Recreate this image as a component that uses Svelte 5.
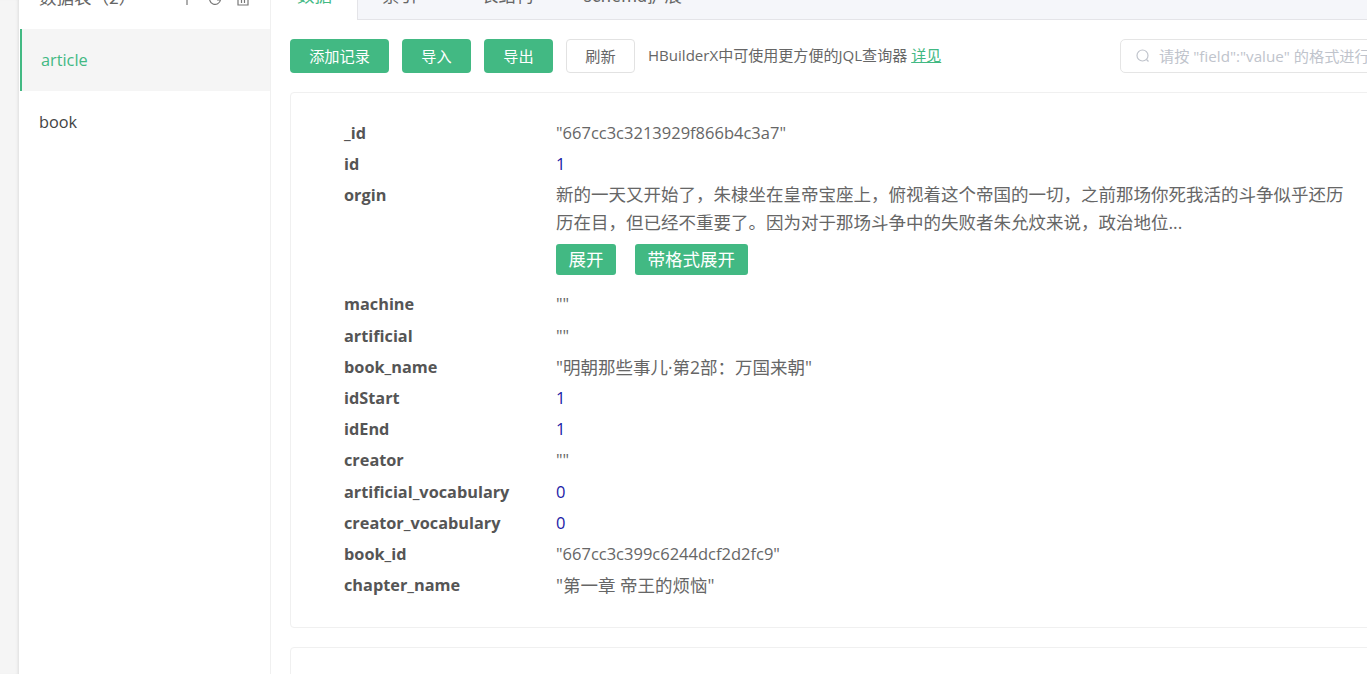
<script>
  const rows = [
    { k: '_id', v: '"667cc3c3213929f866b4c3a7"' },
    { k: 'id', v: '1', n: true },
    { k: 'orgin', long: true },
    { k: 'machine', v: '""' },
    { k: 'artificial', v: '""' },
    { k: 'book_name', v: '"明朝那些事儿·第2部：万国来朝"', cjk: true },
    { k: 'idStart', v: '1', n: true },
    { k: 'idEnd', v: '1', n: true },
    { k: 'creator', v: '""' },
    { k: 'artificial_vocabulary', v: '0', n: true },
    { k: 'creator_vocabulary', v: '0', n: true },
    { k: 'book_id', v: '"667cc3c399c6244dcf2d2fc9"' },
    { k: 'chapter_name', v: '"第一章 帝王的烦恼"', cjk: true }
  ];
</script>

<div class="page">
  <div class="gutter"></div>
  <aside class="side">
    <div class="side-head">
      <span class="side-title">数据表（2）</span>
      <span class="side-icons">
        <svg width="14" height="14" viewBox="0 0 14 14"><path d="M7 1v12M1 7h12" /></svg>
        <svg width="14" height="14" viewBox="0 0 14 14"><path d="M11 3A5.500 5.500 0 1 0 12.500 8H9" /></svg>
        <svg width="14" height="14" viewBox="0 0 14 14"><path d="M1 3h12M2 3v10h10V3M5 1h4M5.500 6v5M8.500 6v5" /></svg>
      </span>
    </div>
    <div class="item active">article</div>
    <div class="item">book</div>
  </aside>
  <main class="main">
    <div class="tabs">
      <span class="tab on">数据</span>
      <div class="tab-rest">
        <span class="tab">索引</span>
        <span class="tab">表结构</span>
        <span class="tab">schema扩展</span>
      </div>
    </div>
    <div class="toolbar">
      <button class="btn green wide">添加记录</button>
      <button class="btn green">导入</button>
      <button class="btn green">导出</button>
      <button class="btn plain">刷新</button>
      <span class="hint">HBuilderX中可使用更方便的JQL查询器 <a href="#top">详见</a></span>
      <div class="search">
        <svg width="14" height="14" viewBox="0 0 14 14"><circle cx="6.500" cy="6.500" r="5.500" /><path d="M10.500 10.500l2 2" /></svg>
        <span>请按 "field":"value" 的格式进行搜索</span>
      </div>
    </div>
    <section class="card">
      {#each rows as r}
        <div class="row" class:tall={r.long}>
          <div class="key">{r.k}</div>
          {#if r.long}
            <div class="val cjk">
              <p class="text">新的一天又开始了，朱棣坐在皇帝宝座上，俯视着这个帝国的一切，之前那场你死我活的斗争似乎还历历在目，但已经不重要了。因为对于那场斗争中的失败者朱允炆来说，政治地位...</p>
              <div class="more">
                <button class="mini">展开</button>
                <button class="mini">带格式展开</button>
              </div>
            </div>
          {:else}
            <div class="val" class:num={r.n} class:cjk={r.cjk}>{r.v}</div>
          {/if}
        </div>
      {/each}
    </section>
    <section class="card next"></section>
  </main>
</div>

<style>
  :global(body) { margin: 0; background: #fff; overflow: hidden; }
  .page {
    display: flex;
    width: 1367px;
    height: 674px;
    overflow: hidden;
    font-family: "Open Sans", "Noto Sans CJK SC", sans-serif;
    color: #666;
  }
  .gutter { width: 19px; flex: none; background: #f5f5f5; box-shadow: inset -3px 0 3px -2px #ddd; }
  .side { width: 252px; flex: none; border-right: 1px solid #f0f0f0; box-sizing: border-box; }
  .side-head { height: 29px; display: flex; justify-content: space-between; padding: 0 20px; box-sizing: border-box; overflow: hidden; }
  .side-title { font-size: 17.500px; line-height: 20px; margin-top: -13px; color: #666; white-space: nowrap; font-family: "Noto Sans CJK SC", sans-serif; }
  .side-icons { display: flex; gap: 14px; margin-top: -8px; height: 14px; }
  .side-icons svg { fill: none; stroke: #777; stroke-width: 1.200; }
  .item { height: 62px; display: flex; align-items: center; padding-left: 20px; font-size: 16.300px; color: #444; }
  .active { background: #f5f5f5; color: #42b983; border-left: 2px solid #42b983; margin-left: 1px; padding-left: 19px; }
  .main { flex: 1; min-width: 0; padding-left: 19px; overflow: hidden; }
  .tabs { height: 20px; display: flex; margin-left: -19px; font-size: 17.500px; font-family: "Noto Sans CJK SC", sans-serif; color: #666; overflow: hidden; }
  .tab { line-height: 20px; margin-top: -15px; white-space: nowrap; }
  .tab.on { width: 86px; box-sizing: border-box; padding-left: 26px; color: #42b983; }
  .tab-rest { flex: 1; display: flex; gap: 50px; padding-left: 24px; background: #f5f6fa; border-left: 1px solid #e4e4e8; border-bottom: 1px solid #e4e4e8; }
  .tab-rest .tab:nth-child(2) { margin-left: 14px; }
  .toolbar { display: flex; align-items: center; gap: 13px; height: 34px; margin-top: 19px; width: 1130px; }
  .btn { height: 34px; padding: 0 0 3px; border-radius: 4px; font: inherit; font-size: 15.200px; cursor: pointer; width: 69px; flex: none; box-sizing: border-box; }
  .btn.wide { width: 99px; }
  .green { background: #42b983; border: none; color: #fff; }
  .plain { background: #fff; border: 1px solid #e2e2e2; color: #666; }
  .hint { font-size: 15.060px; white-space: nowrap; color: #666; margin-top: -3px; }
  .hint a { color: #42b983; }
  .search { margin-left: auto; width: 300px; height: 34px; box-sizing: border-box; border: 1px solid #e5e5e5; border-radius: 5px; display: flex; align-items: center; gap: 9px; padding: 0 0 3px 15px; font-size: 15.200px; color: #c0c4cc; white-space: nowrap; overflow: hidden; flex: none; }
  .search svg { fill: none; stroke: #c0c4cc; stroke-width: 1.200; flex: none; margin-top: 3px; }
  .card { border: 1px solid #f0f0f0; border-radius: 4px; margin-top: 19px; padding: 25px 53px 26px; width: 1200px; box-sizing: border-box; }
  .next { margin-top: 19px; height: 60px; }
  .row { display: flex; min-height: 31.200px; line-height: 31.200px; }
  .key { width: 212px; flex: none; font-weight: 700; color: #555; font-size: 16.300px; white-space: nowrap; }
  .val { font-size: 16.500px; color: #666; width: 790px; line-height: 29.200px; }
  .cjk { font-size: 17.500px; line-height: 31.200px; }
  .num { color: #1a1aa6; }
  .text { margin: 0; line-height: 28px; }
  .more { display: flex; gap: 19px; margin: 8px 0 14px; }
  .mini { height: 31px; padding: 0 12.500px; background: #42b983; border: none; border-radius: 3px; color: #fff; font: inherit; font-size: 17.500px; }
</style>
